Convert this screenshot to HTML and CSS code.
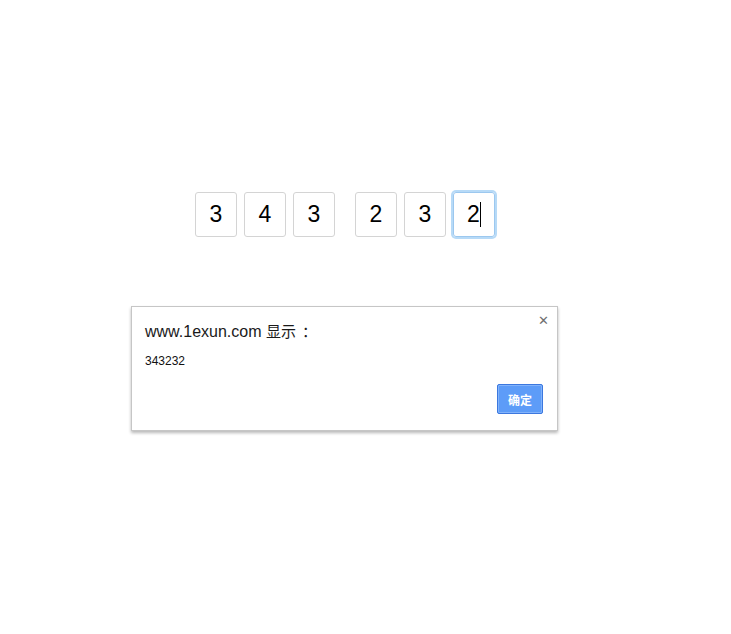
FILE: index.html
```html
<!DOCTYPE html>
<html>
<head>
<meta charset="utf-8">
<link rel="stylesheet" href="styles.css">
</head>
<body>
<div class="code-row">
  <div class="group">
    <div class="digit">3</div>
    <div class="digit">4</div>
    <div class="digit">3</div>
  </div>
  <div class="group">
    <div class="digit">2</div>
    <div class="digit">3</div>
    <div class="digit focus">2<span class="caret"></span></div>
  </div>
</div>
<div class="dialog">
  <div class="close">&#x2715;</div>
  <div class="title">www.1exun.com <span class="cjk">显示<span class="colon">：</span></span></div>
  <div class="msg">343232</div>
  <div class="actions"><button class="ok">确定</button></div>
</div>
</body>
</html>
```
FILE: styles.css
```css
html, body { margin: 0; padding: 0; background: #fff; }
body {
  font-family: Arial, "Liberation Sans", "Noto Sans CJK SC", sans-serif;
  padding-top: 192px;
  height: 634px;
  box-sizing: border-box;
}
.code-row {
  display: flex;
  gap: 20px;
  margin-left: 195px;
}
.group { display: flex; gap: 7px; }
.digit {
  width: 42px;
  height: 45px;
  box-sizing: border-box;
  border: 1px solid #d4d4d4;
  border-radius: 3px;
  display: flex;
  align-items: center;
  justify-content: center;
  font-size: 23px;
  color: #000;
}
.digit.focus {
  border: 1px solid #9cc8ef;
  box-shadow: 0 0 0 2px #b7daf7;
  position: relative;
}
.caret {
  display: inline-block;
  width: 1px;
  height: 25px;
  background: #000;
  margin-left: 0;
  vertical-align: middle;
}
.dialog {
  position: relative;
  margin: 69px 0 0 131px;
  width: 427px;
  height: 125px;
  box-sizing: border-box;
  border: 1px solid #c6c6c6;
  box-shadow: 0 2px 3px rgba(0,0,0,0.28);
  background: #fff;
  padding: 13px 14px 0 13px;
}
.close {
  position: absolute;
  top: 6px;
  right: 8px;
  font-size: 13px;
  font-weight: bold;
  color: #6f6f6f;
  font-family: "DejaVu Sans", sans-serif;
}
.title {
  font-size: 16px;
  color: #1a1a1a;
  line-height: 21px;
}
.cjk {
  font-family: "Noto Sans CJK SC", sans-serif;
  font-size: 15px;
}
.colon { margin-left: 6px; }
.msg {
  font-size: 12px;
  color: #111;
  margin-top: 11px;
  line-height: 16px;
}
.actions {
  display: flex;
  justify-content: flex-end;
  margin-top: 15px;
}
.ok {
  width: 46px;
  height: 30px;
  background: #5d9cf8;
  border: 1px solid #3c78df;
  box-shadow: inset 0 0 0 1px #82b3fb;
  border-radius: 2px;
  color: #fff;
  font-weight: bold;
  font-size: 12px;
  font-family: "Noto Sans CJK SC", sans-serif;
  padding: 0;
  margin: 0;
}
```
